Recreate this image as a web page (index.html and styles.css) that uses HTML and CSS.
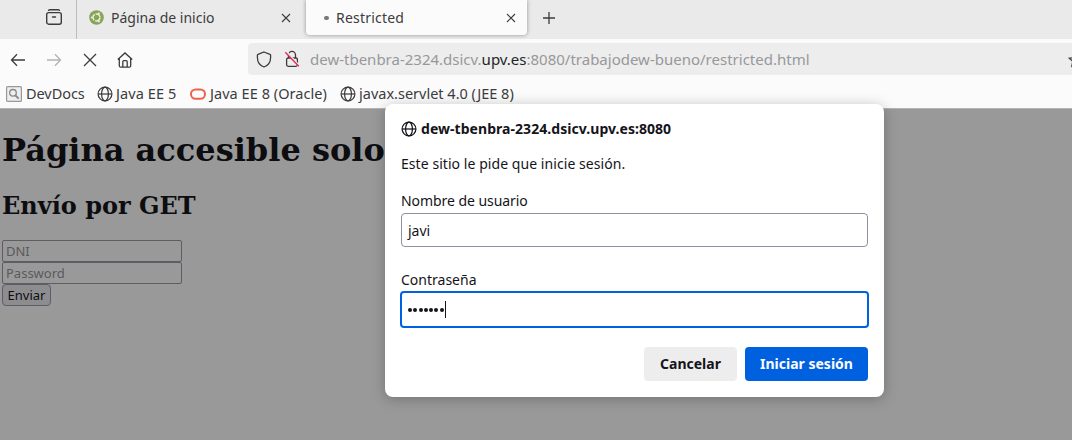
FILE: index.html
```html
<!DOCTYPE html>
<html lang="es">
<head>
<meta charset="utf-8">
<title>Restricted</title>
<link rel="stylesheet" href="styles.css">
</head>
<body>
<svg class="defs" width="0" height="0">
  <symbol id="globe" viewBox="0 0 16 16"><g fill="none" stroke="currentColor" stroke-width="1.25"><circle cx="8" cy="8" r="6.9"/><ellipse cx="8" cy="8" rx="3.4" ry="6.9"/><path d="M1.3 8h13.4"/></g></symbol>
  <symbol id="close" viewBox="0 0 10 10"><path d="M1 1l8 8M9 1L1 9" fill="none" stroke="currentColor" stroke-width="1.1"/></symbol>
</svg>
<div class="window">
  <header class="tabs">
    <div class="tabs-lead">
      <svg width="16" height="16" viewBox="0 0 16 16" fill="none" stroke="currentColor" stroke-width="1.4" stroke-linecap="round"><path d="M2.6 1.2q.6-.5 1.4-.5h8q.8 0 1.4.5"/><rect x=".7" y="3.6" width="14.6" height="11.6" rx="2"/><path d="M6.5 8h3"/></svg>
    </div>
    <div class="tab">
      <svg class="favicon" width="15" height="15" viewBox="0 0 15 15"><circle cx="7.5" cy="7.5" r="7.3" fill="#87a556"/><circle cx="7.5" cy="7.5" r="3.5" fill="none" stroke="#e9f0df" stroke-width="1.5" stroke-dasharray="6.4 .93" stroke-dashoffset="-.5"/><circle cx="2.8" cy="7.5" r="1" fill="#e9f0df"/><circle cx="9.9" cy="3.4" r="1" fill="#e9f0df"/><circle cx="9.9" cy="11.6" r="1" fill="#e9f0df"/></svg>
      <span>Página de inicio</span>
      <svg class="x" width="10" height="10"><use href="#close"/></svg>
    </div>
    <div class="tab active">
      <i class="loading"></i>
      <span class="t-restricted">Restricted</span>
      <svg class="x" width="10" height="10"><use href="#close"/></svg>
    </div>
    <svg class="plus" width="12" height="12" viewBox="0 0 12 12"><path d="M6 0v12M0 6h12" stroke="currentColor" stroke-width="1.3"/></svg>
  </header>
  <nav class="toolbar">
    <svg class="nav-icon back" width="16" height="16" viewBox="0 0 16 16"><path d="M15 8H1.5M7 2.3L1.5 8 7 13.7"/></svg>
    <svg class="nav-icon forward" width="16" height="16" viewBox="0 0 16 16"><path d="M1 8h13.5M9 2.3L14.5 8 9 13.7"/></svg>
    <svg class="nav-icon stop" width="14" height="14" viewBox="0 0 14 14"><path d="M1 1l12 12M13 1L1 13"/></svg>
    <svg class="nav-icon home" width="16" height="16" viewBox="0 0 16 16"><path d="M.8 7.6L8 .9l7.200 6.700M2.300 6.500v7.200q0 1.500 1.500 1.500h8.400q1.500 0 1.500-1.500V6.500M5.800 15V9.700q0-1 1-1h2.400q1 0 1 1V15"/></svg>
    <div class="urlbar">
      <svg class="shield" width="16" height="17" viewBox="0 0 16 17"><path d="M8 1l6 2.300q.6.2.6.9v2.300c0 4.300-2.500 8-6.600 9.500-4.100-1.500-6.600-5.200-6.600-9.500V4.200q0-.7.6-.9z" fill="none" stroke="currentColor" stroke-width="1.3"/></svg>
      <svg class="lock" width="16" height="18" viewBox="0 0 16 18"><path d="M4.500 8V5a3.500 3.700 0 0 1 7 0v3" fill="none" stroke="currentColor" stroke-width="1.3"/><rect x="2.6" y="8" width="10.8" height="8.3" rx="1.5" fill="none" stroke="currentColor" stroke-width="1.3"/><path d="M2.100 1.500l13.300 14.500" stroke="#ededed" stroke-width="2"/><path d="M1.300 2.300l13.500 14" stroke="#e22850" stroke-width="1.3"/></svg>
      <span class="url">dew-tbenbra-2324.dsicv.<b>upv.es</b>:8080/trabajodew-bueno/restricted.html</span>
      <svg class="star" width="16" height="16" viewBox="0 0 16 16"><path d="M8 1.300l2 4.400 4.700.5-3.500 3.200 1 4.800L8 11.800l-4.200 2.400 1-4.800L1.300 6.200 6 5.700z" fill="none" stroke="currentColor" stroke-width="1.3"/></svg>
    </div>
  </nav>
  <div class="bookmarks">
    <svg width="16" height="16" viewBox="0 0 16 16"><rect x=".6" y=".6" width="14.8" height="14.8" rx="1" fill="#eee" stroke="#999" stroke-width="1.2"/><circle cx="7" cy="6.8" r="3.3" fill="none" stroke="#888" stroke-width="1.3"/><path d="M9 9l3.700 3.700" stroke="#888" stroke-width="1.9"/></svg>
    <span class="b-dev">DevDocs</span>
    <svg width="16" height="16"><use href="#globe"/></svg>
    <span class="b-ee5">Java EE 5</span>
    <svg width="16" height="16" viewBox="0 0 16 16"><rect x="1" y="3.4" width="14" height="9.4" rx="4.6" fill="none" stroke="#f0614c" stroke-width="2"/></svg>
    <span class="b-ee8">Java EE 8 (Oracle)</span>
    <svg width="16" height="16"><use href="#globe"/></svg>
    <span class="b-servlet">javax.servlet 4.0 (JEE 8)</span>
  </div>
  <main class="page">
    <h1>Página accesible solo</h1>
    <h2>Envío por GET</h2>
    <form>
      <div class="field">DNI</div>
      <div class="field">Password</div>
      <div class="submit">Enviar</div>
    </form>
  </main>
  <section class="dialog">
    <div class="host"><svg width="16" height="16"><use href="#globe"/></svg><span>dew-tbenbra-2324.dsicv.upv.es:8080</span></div>
    <p class="msg">Este sitio le pide que inicie sesión.</p>
    <div class="label user">Nombre de usuario</div>
    <div class="input">javi</div>
    <div class="label pass">Contraseña</div>
    <div class="input focus"><i></i><i></i><i></i><i></i><i></i><i></i><i></i><b class="caret"></b></div>
    <div class="buttons"><div class="btn cancel">Cancelar</div><div class="btn ok">Iniciar sesión</div></div>
  </section>
</div>
</body>
</html>
```
FILE: styles.css
```css
* { box-sizing: border-box; }
body { margin: 0; font: 14px/20px "Noto Sans", "Open Sans", sans-serif; color: #3c3c3f; overflow: hidden; white-space: nowrap; }
svg { flex: none; display: block; }
.defs { position: absolute; }
.window { position: relative; width: 1072px; height: 440px; overflow: hidden; display: flex; flex-direction: column; background: #fbfbfb; }

.tabs { height: 39px; flex: none; background: #eaeaea; display: flex; }
.tabs-lead { width: 77px; border-right: 1px solid #bcbcbc; padding: 9px 0 0 46px; }
.tab { width: 221px; height: 35px; padding-left: 12px; display: flex; align-items: center; margin-right: 8px; }
.favicon { margin-right: 7px; }
.tab .x { margin-left: auto; margin-right: 7px; }
.tab.active { background: #fbfbfb; border-radius: 0 0 4px 4px; box-shadow: 0 0 4px rgba(0,0,0,.38); padding-left: 18px; }
.tab.active .x { margin-right: 11px; }
.t-restricted { letter-spacing: .2px; }
.loading { width: 5px; height: 4px; border-radius: 2px; background: #77777a; margin-right: 7px; }
.plus { margin: 12px 0 0 8px; }

.toolbar { height: 40px; flex: none; display: flex; align-items: center; }
.nav-icon { fill: none; stroke: currentColor; stroke-width: 1.3; margin-top: 2px; }
.back { margin-left: 10px; }
.forward { margin-left: 20px; color: #b3b3b4; }
.stop { margin-left: 21px; }
.home { margin-left: 20px; }
.urlbar { margin-left: 115px; height: 32px; width: 840px; flex: none; background: #ededed; border-radius: 4px 0 0 4px; display: flex; align-items: center; padding-left: 8px; }
.lock { margin-left: 12px; }
.url { margin-left: 10px; color: #98989a; width: 758px; flex: none; font-size: 15px; }
.url b { font-weight: 400; color: #252528; }
.star { color: #444; margin-top: 2px; }

.bookmarks { height: 30px; flex: none; display: flex; align-items: center; padding-left: 6px; border-bottom: 1px solid #b4b4b4; font-size: 14.5px; }
.bookmarks span { margin-left: 4px; flex: none; line-height: 18px; margin-bottom: 2px; }
.bookmarks .b-dev { width: 71px; letter-spacing: -.05px; }
.bookmarks .b-ee5 { width: 73px; letter-spacing: .1px; margin-left: 3px; margin-right: 1px; }
.bookmarks .b-ee8 { width: 130px; letter-spacing: .05px; }
.bookmarks .b-servlet { margin-left: 3px; }

.page { flex: 1; background: #99999a; padding-left: 2px; color: #0d0d10; }
h1, h2 { font-family: "DejaVu Serif", serif; margin: 0; }
h1 { font-size: 32px; line-height: 38px; padding-top: 22px; }
h2 { font-size: 24px; line-height: 28px; padding-top: 23px; }
.page form { padding-top: 20px; font-size: 13px; }
.field { width: 180px; height: 22px; border: 1px solid #5d5d66; border-radius: 2px; padding-left: 3px; line-height: 20px; color: #5a5a5c; }
.submit { width: 49px; height: 22px; border: 1px solid #5d5d66; border-radius: 4px; background: #8d8d90; line-height: 20px; text-align: center; }

.dialog { position: absolute; left: 385px; top: 104px; width: 499px; height: 293px; background: #fff; border-radius: 8px; box-shadow: 0 2px 14px rgba(0,0,0,.25); padding: 15px 16px 16px; color: #15141a; }
.host { display: flex; align-items: center; height: 20px; font-weight: 700; letter-spacing: .05px; }
.host span { margin-left: 4px; }
.msg { margin: 15px 0 0; letter-spacing: .06px; }
.user { margin-top: 17px; letter-spacing: -.06px; }
.input { margin-top: 2px; height: 34px; border: 1px solid #8f8f9d; border-radius: 4px; padding-left: 6px; line-height: 33px; }
.pass { margin-top: 23px; }
.input.focus { margin: 1px -1px 0; height: 37px; border: 2px solid #0061e0; display: flex; align-items: center; }
.input i { width: 4px; height: 4px; border-radius: 50%; background: #15141a; margin-right: 1.3px; }
.caret { width: 1px; height: 17px; background: #15141a; }
.buttons { display: flex; justify-content: flex-end; gap: 8px; margin-top: 19px; font-weight: 700; }
.btn { height: 34px; line-height: 34px; border-radius: 4px; text-align: center; }
.cancel { width: 93px; background: #ededed; }
.ok { width: 123px; background: #0061e0; color: #fbfbfe; }
```
